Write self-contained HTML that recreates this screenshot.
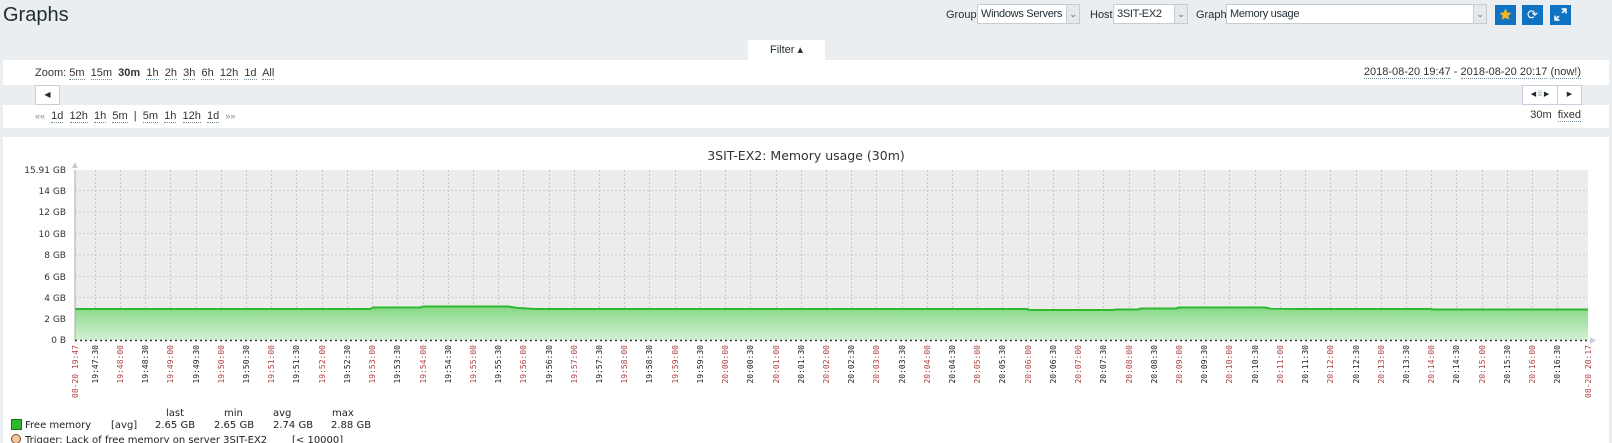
<!DOCTYPE html>
<html><head><meta charset="utf-8"><style>
*{margin:0;padding:0;box-sizing:border-box}
body{width:1612px;height:443px;overflow:hidden;background:#ebeef0;font-family:"Liberation Sans",Arial,sans-serif;font-size:11px;color:#1f2c33;position:relative}
.a{position:absolute;white-space:nowrap}
.sel{position:absolute;background:#fff;border:1px solid #c5cdd1;height:20px;top:4px;font-size:11px;line-height:18px;padding-left:3px;letter-spacing:-0.3px;overflow:hidden}
.sel i{position:absolute;right:0;top:0;width:13px;height:18px;background:#e6e9eb;border-left:1px solid #c5cdd1;color:#666;font-style:normal;font-size:9px;text-align:center;line-height:18px}
.btn{position:absolute;top:5px;width:21px;height:20px;background:#0f73c4;color:#fff;text-align:center;line-height:20px;font-size:13px}
u{text-decoration:none;border-bottom:1px dotted #768d99}
</style></head><body>
<div class="a" style="left:3px;top:4px;font-size:20px;color:#1f2c33">Graphs</div>
<div class="a" style="left:946px;top:9px">Group</div>
<div class="sel" style="left:977px;width:103px">Windows Servers<i>⌄</i></div>
<div class="a" style="left:1090px;top:9px">Host</div>
<div class="sel" style="left:1113px;width:75px">3SIT-EX2<i>⌄</i></div>
<div class="a" style="left:1196px;top:9px">Graph</div>
<div class="sel" style="left:1226px;width:261px">Memory usage<i>⌄</i></div>
<div class="btn" style="left:1495px"><svg width="13" height="13" viewBox="0 0 12 12" style="margin-top:3px"><path d="M6 .5l1.7 3.6 3.8.4-2.9 2.6.9 3.8L6 9 2.5 10.9l.9-3.8L.5 4.5l3.8-.4z" fill="#f7b723"/></svg></div>
<div class="btn" style="left:1522px">⟳</div>
<div class="btn" style="left:1550px;width:21px"><svg width="13" height="13" viewBox="0 0 12 12" style="margin-top:3px"><path d="M7 1h4v4M11 1L7.5 4.5M5 11H1V7M1 11l3.5-3.5" stroke="#fff" stroke-width="1.5" fill="none"/></svg></div>

<div class="a" style="left:748px;top:40px;width:77px;height:21px;background:#fff;text-align:center;line-height:20px;font-size:11px">Filter ▴</div>
<div class="a" style="left:3px;top:60px;width:1606px;height:68px;background:#fff"></div>
<div class="a" style="left:3px;top:85px;width:1606px;height:20px;background:#ebeef0"></div>
<div class="a" style="left:35px;top:67px;font-size:11px;color:#333">Zoom: <u>5m</u>&nbsp; <u>15m</u>&nbsp; <b>30m</b>&nbsp; <u>1h</u>&nbsp; <u>2h</u>&nbsp; <u>3h</u>&nbsp; <u>6h</u>&nbsp; <u>12h</u>&nbsp; <u>1d</u>&nbsp; <u>All</u></div>
<div class="a" style="left:35px;top:85px;width:25px;height:20px;background:#fff;border:1px solid #ccd;text-align:center;line-height:18px;font-size:8px">◀</div>
<div class="a" style="left:35px;top:110px;font-size:11px;color:#333"><span style="font-size:9px;color:#888">««</span>&nbsp; <u>1d</u>&nbsp; <u>12h</u>&nbsp; <u>1h</u>&nbsp; <u>5m</u>&nbsp; |&nbsp; <u>5m</u>&nbsp; <u>1h</u>&nbsp; <u>12h</u>&nbsp; <u>1d</u>&nbsp; <span style="font-size:9px;color:#888">»»</span></div>
<div class="a" style="right:31px;top:66px;font-size:11px;color:#333"><u>2018-08-20 19:47</u> - <u>2018-08-20 20:17</u> <u>(now!)</u></div>
<div class="a" style="left:1522px;top:85px;width:36px;height:20px;background:#fff;border:1px solid #ccd;text-align:center;line-height:18px;font-size:7px">◀ ⁞⁞ ▶</div>
<div class="a" style="left:1557px;top:85px;width:25px;height:20px;background:#fff;border:1px solid #ccd;text-align:center;line-height:18px;font-size:7px">▶</div>
<div class="a" style="right:31px;top:109px;font-size:11px;color:#333">30m&nbsp; <u>fixed</u></div>

<div class="a" style="left:3px;top:137px;width:1606px;height:306px;background:#fff"></div>
<svg class="a" style="left:0;top:0" width="1612" height="443" font-family="DejaVu Sans,sans-serif">
<defs><linearGradient id="g" x1="0" y1="0" x2="0" y2="1"><stop offset="0" stop-color="#86d886"/><stop offset="1" stop-color="#d4f1d4"/></linearGradient></defs>
<text x="806" y="160" font-size="12.5" fill="#333" text-anchor="middle">3SIT-EX2: Memory usage (30m)</text>
<rect x="75" y="170" width="1513" height="170" fill="#ececec"/>
<g stroke="#cfcfcf" stroke-dasharray="2,2" stroke-width="1">
<path d="M75 190.5H1588M75 212H1588M75 233.5H1588M75 255H1588M75 276.5H1588M75 297.5H1588M75 319H1588"/>
</g>
<path d="M95.5 170V340M120.5 170V340M145.5 170V340M170.5 170V340M196.5 170V340M221.5 170V340M246.5 170V340M271.5 170V340M296.5 170V340M322.5 170V340M347.5 170V340M372.5 170V340M397.5 170V340M423.5 170V340M448.5 170V340M473.5 170V340M498.5 170V340M523.5 170V340M549.5 170V340M574.5 170V340M599.5 170V340M624.5 170V340M649.5 170V340M675.5 170V340M700.5 170V340M725.5 170V340M750.5 170V340M776.5 170V340M801.5 170V340M826.5 170V340M851.5 170V340M876.5 170V340M902.5 170V340M927.5 170V340M952.5 170V340M977.5 170V340M1002.5 170V340M1028.5 170V340M1053.5 170V340M1078.5 170V340M1103.5 170V340M1129.5 170V340M1154.5 170V340M1179.5 170V340M1204.5 170V340M1229.5 170V340M1255.5 170V340M1280.5 170V340M1305.5 170V340M1330.5 170V340M1356.5 170V340M1381.5 170V340M1406.5 170V340M1431.5 170V340M1456.5 170V340M1482.5 170V340M1507.5 170V340M1532.5 170V340M1557.5 170V340" stroke="#c4c4c4" stroke-dasharray="2,2"/>
<polygon fill="url(#g)" points="75,340 75,309 370,309 373,307.5 420,307.5 423,306.5 508,306.5 518,308 535,309 1027,309 1029,310 1113,310 1116,309.5 1138,309.5 1141,308.5 1176,308.5 1179,307.5 1265,307.5 1270,308.5 1300,309 1430,309 1434,309.5 1588,309.5 1588,340"/>
<polyline fill="none" stroke="#2eb82e" stroke-width="2" points="75,309 370,309 373,307.5 420,307.5 423,306.5 508,306.5 518,308 535,309 1027,309 1029,310 1113,310 1116,309.5 1138,309.5 1141,308.5 1176,308.5 1179,307.5 1265,307.5 1270,308.5 1300,309 1430,309 1434,309.5 1588,309.5"/>
<path d="M75 170V341" stroke="#aaa"/>
<path d="M72 168l3-6 3 6z" fill="#ccc"/>
<path d="M75 340.5H1590" stroke="#333" stroke-dasharray="2,3" stroke-width="1.5"/>
<path d="M1590 337l6 3.5-6 3.5z" fill="#ccd"/>
<g font-size="9" fill="#333" text-anchor="end">
<text x="66" y="173">15.91 GB</text><text x="66" y="194">14 GB</text><text x="66" y="215">12 GB</text><text x="66" y="237">10 GB</text><text x="66" y="258">8 GB</text><text x="66" y="280">6 GB</text><text x="66" y="301">4 GB</text><text x="66" y="322">2 GB</text><text x="66" y="343">0 B</text>
</g>
<g font-size="8" font-family="DejaVu Sans Mono,monospace" text-anchor="end" fill="#222">
<text fill="#b04040" transform="translate(78,345) rotate(-90)">08-20 19:47</text>
<text transform="translate(98,345) rotate(-90)">19:47:30</text>
<text fill="#b04040" transform="translate(123,345) rotate(-90)">19:48:00</text>
<text transform="translate(148,345) rotate(-90)">19:48:30</text>
<text fill="#b04040" transform="translate(173,345) rotate(-90)">19:49:00</text>
<text transform="translate(199,345) rotate(-90)">19:49:30</text>
<text fill="#b04040" transform="translate(224,345) rotate(-90)">19:50:00</text>
<text transform="translate(249,345) rotate(-90)">19:50:30</text>
<text fill="#b04040" transform="translate(274,345) rotate(-90)">19:51:00</text>
<text transform="translate(299,345) rotate(-90)">19:51:30</text>
<text fill="#b04040" transform="translate(325,345) rotate(-90)">19:52:00</text>
<text transform="translate(350,345) rotate(-90)">19:52:30</text>
<text fill="#b04040" transform="translate(375,345) rotate(-90)">19:53:00</text>
<text transform="translate(400,345) rotate(-90)">19:53:30</text>
<text fill="#b04040" transform="translate(426,345) rotate(-90)">19:54:00</text>
<text transform="translate(451,345) rotate(-90)">19:54:30</text>
<text fill="#b04040" transform="translate(476,345) rotate(-90)">19:55:00</text>
<text transform="translate(501,345) rotate(-90)">19:55:30</text>
<text fill="#b04040" transform="translate(526,345) rotate(-90)">19:56:00</text>
<text transform="translate(552,345) rotate(-90)">19:56:30</text>
<text fill="#b04040" transform="translate(577,345) rotate(-90)">19:57:00</text>
<text transform="translate(602,345) rotate(-90)">19:57:30</text>
<text fill="#b04040" transform="translate(627,345) rotate(-90)">19:58:00</text>
<text transform="translate(652,345) rotate(-90)">19:58:30</text>
<text fill="#b04040" transform="translate(678,345) rotate(-90)">19:59:00</text>
<text transform="translate(703,345) rotate(-90)">19:59:30</text>
<text fill="#b04040" transform="translate(728,345) rotate(-90)">20:00:00</text>
<text transform="translate(753,345) rotate(-90)">20:00:30</text>
<text fill="#b04040" transform="translate(779,345) rotate(-90)">20:01:00</text>
<text transform="translate(804,345) rotate(-90)">20:01:30</text>
<text fill="#b04040" transform="translate(829,345) rotate(-90)">20:02:00</text>
<text transform="translate(854,345) rotate(-90)">20:02:30</text>
<text fill="#b04040" transform="translate(879,345) rotate(-90)">20:03:00</text>
<text transform="translate(905,345) rotate(-90)">20:03:30</text>
<text fill="#b04040" transform="translate(930,345) rotate(-90)">20:04:00</text>
<text transform="translate(955,345) rotate(-90)">20:04:30</text>
<text fill="#b04040" transform="translate(980,345) rotate(-90)">20:05:00</text>
<text transform="translate(1005,345) rotate(-90)">20:05:30</text>
<text fill="#b04040" transform="translate(1031,345) rotate(-90)">20:06:00</text>
<text transform="translate(1056,345) rotate(-90)">20:06:30</text>
<text fill="#b04040" transform="translate(1081,345) rotate(-90)">20:07:00</text>
<text transform="translate(1106,345) rotate(-90)">20:07:30</text>
<text fill="#b04040" transform="translate(1132,345) rotate(-90)">20:08:00</text>
<text transform="translate(1157,345) rotate(-90)">20:08:30</text>
<text fill="#b04040" transform="translate(1182,345) rotate(-90)">20:09:00</text>
<text transform="translate(1207,345) rotate(-90)">20:09:30</text>
<text fill="#b04040" transform="translate(1232,345) rotate(-90)">20:10:00</text>
<text transform="translate(1258,345) rotate(-90)">20:10:30</text>
<text fill="#b04040" transform="translate(1283,345) rotate(-90)">20:11:00</text>
<text transform="translate(1308,345) rotate(-90)">20:11:30</text>
<text fill="#b04040" transform="translate(1333,345) rotate(-90)">20:12:00</text>
<text transform="translate(1359,345) rotate(-90)">20:12:30</text>
<text fill="#b04040" transform="translate(1384,345) rotate(-90)">20:13:00</text>
<text transform="translate(1409,345) rotate(-90)">20:13:30</text>
<text fill="#b04040" transform="translate(1434,345) rotate(-90)">20:14:00</text>
<text transform="translate(1459,345) rotate(-90)">20:14:30</text>
<text fill="#b04040" transform="translate(1485,345) rotate(-90)">20:15:00</text>
<text transform="translate(1510,345) rotate(-90)">20:15:30</text>
<text fill="#b04040" transform="translate(1535,345) rotate(-90)">20:16:00</text>
<text transform="translate(1560,345) rotate(-90)">20:16:30</text>
<text fill="#b04040" transform="translate(1591,345) rotate(-90)">08-20 20:17</text>
</g>
<g font-size="10" fill="#222">
<text x="166" y="416">last</text><text x="224" y="416">min</text><text x="273" y="416">avg</text><text x="332" y="416">max</text>
<rect x="11.5" y="419.5" width="10" height="10" fill="#2eb82e" stroke="#1a6e1a"/>
<text x="25" y="428">Free memory</text><text x="111" y="428">[avg]</text>
<text x="155" y="428">2.65 GB</text><text x="214" y="428">2.65 GB</text><text x="273" y="428">2.74 GB</text><text x="331" y="428">2.88 GB</text>
<circle cx="16" cy="439" r="4.5" fill="#f4c49a" stroke="#7a5030"/>
<text x="25" y="443">Trigger: Lack of free memory on server 3SIT-EX2</text><text x="292" y="443">[&lt; 10000]</text>
</g>
</svg>
</body></html>
